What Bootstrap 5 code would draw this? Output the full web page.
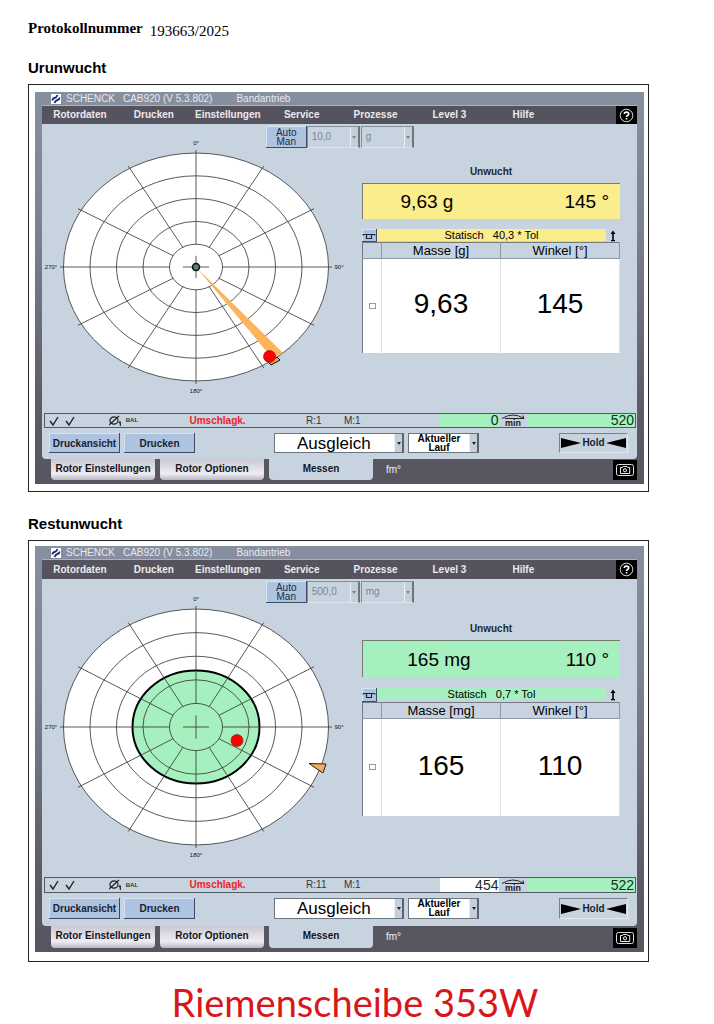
<!DOCTYPE html>
<html lang="de">
<head>
<meta charset="utf-8">
<meta name="viewport" content="width=device-width, initial-scale=1">
<title>Protokoll 193663/2025</title>
<link href="https://cdn.jsdelivr.net/npm/bootstrap@5.3.0/dist/css/bootstrap.min.css" rel="stylesheet">
<style>
:root { --panel: #c7d4e0; --ok: #a5f0be; --warn: #fbec8c; }
body { font-family: "Liberation Sans", Arial, sans-serif; color: #000; background: #fff; }
.sheet { padding: 16px 65px 0 28px; }
.protocol { font-family: "Liberation Serif", "Times New Roman", serif; font-size: 15px; line-height: 24px; gap: 7px; height: 42px; }
.protocol dd { padding-top: 3px; }
.section-title { font-size: 15px; line-height: 20px; font-weight: 700; margin: 0 0 6px; }
.frame { border: 1px solid #222; padding: 7px 4px 7px 6px; margin-bottom: 22px; }
.frame.tall { padding: 5px 4px 9px 6px; margin-bottom: 20px; }

.machine { font-size: 10px; line-height: 12px; padding: 0 7px 4px; background: linear-gradient(#8790a0, #7b8190 35%, #5d5b66 80%, #57555f); }
.titlebar { height: 14px; color: #e6e9f0; padding-left: 9px; border-bottom: 1px solid #a9b2bf; }
.titlebar svg { width: 10px; height: 10px; margin-right: 5px; }
.menu { background: #55535e; height: 18px; }
.tall .menu { height: 19px; }
.menu .nav { flex: 1 1 0; padding-left: 1px; }
.menu a { flex: 0 0 12.9%; color: #eceaf0; text-align: center; text-decoration: none; font-weight: 700; }
.icon-btn { background: #000; border: 0; padding: 0; display: grid; place-items: center; }
.help { width: 21px; height: 100%; }
.help svg { width: 15px; height: 15px; }

.screen { background: var(--panel); border-radius: 0 0 4px 4px; padding-bottom: 6px; }
.tall .screen { padding-bottom: 7px; }
.stage { display: grid; grid-template-columns: minmax(0, 320fr) minmax(0, 275fr); grid-template-rows: 26px 1fr; }
.dial { grid-area: 1 / 1 / 3 / 2; width: 100%; display: block; }
.dial text { font-size: 6px; text-anchor: middle; fill: #111; }
.tools { grid-area: 1 / 1 / 2 / 3; padding: 2px 0 0 37.6%; z-index: 1; display: flex; height: 24px; }
.results { grid-area: 2 / 2 / 3 / 3; padding-right: 17px; }

.key { background: #adc3e0; border: 0; border-radius: 0; color: #000; padding: 0; font-size: 10px; line-height: 9px; box-shadow: inset -1px -1px #3f4b66, inset 1px 1px #d7e4f4; }
.tools .key { width: 41px; color: #222c3a; }
.combo { display: flex; position: relative; min-width: 0; background: #fff; border: 1px solid #6d7580; border-right: 2px solid #5b626c; }
.combo select { appearance: none; border: 0; background: transparent; color: inherit; padding: 0 0 0 4px; width: 100%; min-width: 0; font-size: inherit; border-radius: 0; }
.combo .arrow { position: absolute; right: 0; top: 0; bottom: 0; width: 8px; background: #c3cfdb; border-left: 1px solid #e9eef4; pointer-events: none; display: grid; place-items: center; }
.combo .arrow::after { content: ""; border: 2px solid transparent; border-top: 3px solid #222; border-bottom: 0; }
.tools .combo { width: 53px; margin-right: 1px; background: transparent; color: #7b8590; border-color: #87909a #6d7580 #dde5ec #87909a; }
.tools .combo .arrow::after { border-top-color: #7b8590; }

.caption { font-weight: 700; font-size: 10px; line-height: 12px; text-align: center; padding: 16px 0 5px; color: #1d2a33; }
.readout { height: 36px; font-size: 19px; line-height: 35px; border: 1px solid #777c70; border-width: 1px 0 0 1px; display: grid; grid-template-columns: 52% 1fr; margin-bottom: 10px; padding-right: 11px; }
.readout span { text-align: center; }
.readout span + span { text-align: right; }
.warn { background: var(--warn); }
.ok { background: var(--ok); }
.tolrow { height: 13px; font-size: 11px; line-height: 12px; white-space: pre; }
.tolrow .key { width: 15px; }
.tolrow .tol { flex: 1; text-align: center; height: 12px; }
.tolrow .up { width: 14px; height: 13px; }
.values { width: 100%; table-layout: fixed; background: #fff; border: 1px solid #727a84; border-width: 1px 0 0 1px; text-align: center; }
.values th { font-weight: 400; font-size: 13px; line-height: 15px; background: var(--panel); border: 1px solid #8d98a4; border-width: 0 1px 1px 0; padding: 0; }
.values td { height: 94px; font-size: 28px; line-height: 30px; padding: 0 0 3px; border-right: 1px solid #dde4e4; vertical-align: middle; }
.values col:first-child { width: 19px; }
.values td:first-child { line-height: 7px; padding: 0; }
.values input { appearance: none; display: block; width: 7px; height: 6px; border: 1px solid #9a9a9a; margin: 0 auto; }
.tall .caption { padding: 18px 0 5px; }
.tall .readout { height: 37px; line-height: 37px; margin-bottom: 11px; }
.tall .tolrow { height: 14px; }
.tall .values td { height: 97px; }

.status { margin: 0 1px 5px 2px; height: 15px; line-height: 13px; border: 1px solid #4f5a64; display: grid; align-items: center; white-space: nowrap; color: #333;
  grid-template-columns: minmax(0, 64fr) minmax(0, 81fr) minmax(0, 117fr) minmax(0, 38fr) minmax(0, 96fr) minmax(0, 60fr) minmax(0, 28fr) minmax(0, 108fr); }
.tall .status { height: 16px; line-height: 14px; }
.status svg { display: block; }
.status .speed { font-size: 14px; text-align: right; color: #10301c; height: 100%; padding-right: 1px; }
.alarm { color: #ee1c25; font-weight: 700; }
.bal { font-size: 6px; font-weight: 700; }
.controls { padding: 0 9px 0 7px; height: 20px; display: grid;
  grid-template-columns: minmax(0, 71fr) minmax(0, 71fr) minmax(0, 71fr) minmax(0, 130fr) minmax(0, 71fr) minmax(0, 72fr) minmax(0, 69fr); column-gap: 4px; }
.tall .controls { height: 21px; }
.controls .key { font-weight: 700; color: #1a2230; }
.controls .mode { grid-column: 4; font-size: 17px; }
.controls .mode select { padding-left: 22px; line-height: 20px; height: 18px; }
.controls .run select { color: transparent; }
.controls .run option { color: #000; }
.run .face { position: absolute; inset: 0 8px 0 0; text-align: center; line-height: 9px; font-weight: 700; pointer-events: none; }
.hold { grid-column: 7; color: #1a2230; background: transparent; border: 1px solid #78828c; border-color: #78828c #e3eaf0 #e3eaf0 #78828c; padding: 0 1px; font-weight: 700; }
.hold svg { width: 20px; height: 10px; }

.tabs { height: 21px; gap: 5px; padding-left: 9px; }
.tall .tabs { height: 22px; }
.tabs a { flex: 0 0 104px; text-align: center; line-height: 20px; color: #15151c; font-weight: 700; text-decoration: none; border-radius: 0 0 4px 4px; background: linear-gradient(#c9c7d2, #efedf3 70%, #b9b7c4); }
.tabs a.active { background: var(--panel); }
.tabs .unit { color: #f0eef4; padding-left: 8px; }
.camera { width: 24px; height: 20px; align-self: end; }
.camera svg { width: 18px; height: 12px; }
.part { font-family: Lato, sans-serif; color: #d9161c; font-size: 38px; line-height: 40px; text-align: center; padding: 0 4px 0 0; margin: 0; }
</style>
</head>
<body>
<svg width="0" height="0" class="position-absolute" aria-hidden="true">
  <defs>
    <g id="rings" fill="none" stroke="#3a3a3a" stroke-width=".9">
      <circle r="26.5"/><circle r="53"/><circle r="79.5"/><circle r="106"/><circle r="132.5"/>
      <path d="M-13 0H13M0 -13V13M26.5 0H136M-26.5 0H-136M0 26.5V136M0 -26.5V-136"/>
      <path d="M13.2 23L67.8 117.400M-13.2 23L-67.8 117.400M13.2 -23L67.8 -117.400M-13.2 -23L-67.8 -117.400M23 13.200L118 67.800M-23 13.200L-118 67.800M23 -13.200L118 -67.800M-23 -13.200L-118 -67.800"/>
    </g>
    <symbol id="logo" viewBox="0 0 10 10"><path fill="#fff" d="M0 0h10v10H0z"/><path fill="none" stroke="#1d2c78" stroke-width="1.900" d="M1.500 6.500Q1.500 4.500 3.500 4T6.500 1M8.500 3.500Q8.500 5.500 6.500 6T3.500 9"/></symbol>
    <symbol id="question" viewBox="0 0 15 15"><circle cx="7.500" cy="7.500" r="6.300" fill="none" stroke="#ddd"/><path d="M5.300 6C5.300 3.500 9.700 3.500 9.700 6c0 1.500-2.200 1.500-2.200 3" fill="none" stroke="#fff" stroke-width="1.600"/><path fill="#fff" d="M6.700 10h1.600v1.500H6.700z"/></symbol>
    <symbol id="up" viewBox="0 0 14 13"><path d="M7 12V3" stroke="#000" stroke-width="1.600"/><path d="M4.500 5L7 1.500 9.500 5zM5 11h4v1.200H5z"/></symbol>
    <symbol id="rotor" viewBox="0 0 15 12"><path d="M1 4.500h12M4.500 4.500v4h5v-4M1 4.500v1M13 4.500v1" fill="none" stroke="#1c2438" stroke-width="1.200"/></symbol>
    <symbol id="checks" viewBox="0 0 26 12"><path d="M1 6l3 4 5-8M17 6l3 4 5-8" fill="none" stroke="#222" stroke-width="1.400"/></symbol>
    <symbol id="phase" viewBox="0 0 13 12"><ellipse cx="5" cy="5.500" rx="4" ry="3.600" fill="none" stroke="#222" stroke-width="1.200"/><path d="M0 10L10 1M11.300 6.500V11M10 8l1.300-1.500" fill="none" stroke="#222" stroke-width="1.200"/></symbol>
    <symbol id="rpm" viewBox="0 0 28 13"><path d="M3 4.500Q14-2.500 25 4.500M6 4.500H21M25 4.500l-1-3M25 4.500h-4" fill="none" stroke="#222"/><text x="14" y="12.500" font-size="9" font-weight="700" text-anchor="middle" fill="#222">min</text></symbol>
    <symbol id="cam" viewBox="0 0 18 12"><rect x=".5" y=".5" width="17" height="11" rx="2" fill="none" stroke="#ddd"/><path d="M4.500 3.500h2l.6-1h4l.6 1h2v6h-9.200z" fill="none" stroke="#eee"/><circle cx="9" cy="6.300" r="1.600" fill="none" stroke="#fff"/></symbol>
  </defs>
</svg>

<main class="sheet">
  <dl class="protocol d-flex mb-0"><dt>Protokollnummer</dt><dd class="mb-0">193663/2025</dd></dl>

  <h2 class="section-title">Urunwucht</h2>
  <section class="frame">
    <div class="machine">
      <div class="titlebar d-flex align-items-center">
        <svg aria-hidden="true"><use href="#logo"/></svg><span>SCHENCK</span><span class="ms-2">CAB920 (V 5.3.802)</span><span class="ms-4">Bandantrieb</span>
      </div>
      <div class="menu d-flex align-items-center">
        <nav class="nav flex-nowrap"><a href="#">Rotordaten</a><a href="#">Drucken</a><a href="#">Einstellungen</a><a href="#">Service</a><a href="#">Prozesse</a><a href="#">Level 3</a><a href="#">Hilfe</a></nav>
        <button class="icon-btn help" aria-label="Hilfe"><svg><use href="#question"/></svg></button>
      </div>
      <div class="screen">
        <div class="stage">
          <svg class="dial" viewBox="-154 -143 320 289" role="img" aria-label="Polardiagramm Urunwucht">
            <ellipse rx="132.500" ry="114" fill="#fff"/>
            <use href="#rings" transform="scale(1 .86)"/>
            <path d="M0 0L87 86 76 91z" fill="#fdb45c"/>
            <circle r="3.500" fill="#4f8a62" stroke="#111" stroke-width="1.500"/>
            <path d="M72 95l9-5 3 3-9 5z" fill="#f7a048" stroke="#111"/>
            <circle cx="73.500" cy="89.500" r="6" fill="#f00" stroke="#7a1010" stroke-width=".6"/>
            <text x="0" y="-122">0°</text><text x="143" y="2">90°</text><text x="0" y="126">180°</text><text x="-145" y="2">270°</text>
          </svg>
          <div class="tools">
            <button class="key">Auto<br>Man</button>
            <div class="combo"><select aria-label="Skala" disabled><option>10,0</option></select><span class="arrow"></span></div>
            <div class="combo"><select aria-label="Einheit" disabled><option>g</option></select><span class="arrow"></span></div>
          </div>
          <div class="results">
            <div class="caption">Unwucht</div>
            <div class="readout warn"><span>9,63 g</span><span>145 °</span></div>
            <div class="tolrow d-flex"><button class="key" aria-label="Ebene"><svg width="15" height="12" class="d-block"><use href="#rotor"/></svg></button><div class="tol warn">Statisch   40,3 * Tol</div><svg class="up"><use href="#up"/></svg></div>
            <table class="values"><colgroup><col><col><col></colgroup>
              <thead><tr><th></th><th>Masse [g]</th><th>Winkel [°]</th></tr></thead>
              <tbody><tr><td><input type="checkbox" aria-label="Auswahl"></td><td>9,63</td><td>145</td></tr></tbody>
            </table>
          </div>
        </div>
        <div class="status">
          <svg width="26" height="12" class="ms-1"><use href="#checks"/></svg>
          <div class="d-flex align-items-center"><svg width="13" height="12" class="me-1"><use href="#phase"/></svg><span class="bal">BAL</span></div>
          <span class="alarm">Umschlagk.</span><span>R:1</span><span>M:1</span>
          <div class="speed ok">0</div><svg width="100%" height="13"><use href="#rpm"/></svg><div class="speed ok">520</div>
        </div>
        <div class="controls">
          <button class="key">Druckansicht</button><button class="key">Drucken</button>
          <div class="combo mode"><select aria-label="Modus"><option>Ausgleich</option></select><span class="arrow"></span></div>
          <div class="combo run"><select aria-label="Lauf"><option>Aktueller Lauf</option></select><span class="face" aria-hidden="true">Aktueller<br>Lauf</span><span class="arrow"></span></div>
          <button class="hold d-flex align-items-center justify-content-between"><svg viewBox="0 0 20 10"><path d="M0 0l20 5-20 5z"/></svg>Hold<svg viewBox="0 0 20 10"><path d="M20 0L0 5l20 5z"/></svg></button>
        </div>
      </div>
      <nav class="tabs d-flex"><a href="#">Rotor Einstellungen</a><a href="#">Rotor Optionen</a><a href="#" class="active">Messen</a><span class="unit align-self-center">fm°</span>
        <button class="icon-btn camera ms-auto" aria-label="Bildschirmfoto"><svg><use href="#cam"/></svg></button></nav>
    </div>
  </section>

  <h2 class="section-title">Restunwucht</h2>
  <section class="frame tall">
    <div class="machine">
      <div class="titlebar d-flex align-items-center">
        <svg aria-hidden="true"><use href="#logo"/></svg><span>SCHENCK</span><span class="ms-2">CAB920 (V 5.3.802)</span><span class="ms-4">Bandantrieb</span>
      </div>
      <div class="menu d-flex align-items-center">
        <nav class="nav flex-nowrap"><a href="#">Rotordaten</a><a href="#">Drucken</a><a href="#">Einstellungen</a><a href="#">Service</a><a href="#">Prozesse</a><a href="#">Level 3</a><a href="#">Hilfe</a></nav>
        <button class="icon-btn help" aria-label="Hilfe"><svg><use href="#question"/></svg></button>
      </div>
      <div class="screen">
        <div class="stage">
          <svg class="dial" viewBox="-154 -148 320 298" role="img" aria-label="Polardiagramm Restunwucht">
            <ellipse rx="132.500" ry="118" fill="#fff"/>
            <ellipse rx="63.500" ry="56.500" fill="#a5f0be" stroke="#000" stroke-width="2"/>
            <use href="#rings" transform="scale(1 .89)"/>
            <path d="M113 36.500l17 .5-3 9z" fill="#f9ab55" stroke="#222"/>
            <circle cx="41" cy="13.500" r="6" fill="#f00" stroke="#7a1010" stroke-width=".6"/>
            <text x="0" y="-126">0°</text><text x="143" y="2">90°</text><text x="0" y="130">180°</text><text x="-145" y="2">270°</text>
          </svg>
          <div class="tools">
            <button class="key">Auto<br>Man</button>
            <div class="combo"><select aria-label="Skala" disabled><option>500,0</option></select><span class="arrow"></span></div>
            <div class="combo"><select aria-label="Einheit" disabled><option>mg</option></select><span class="arrow"></span></div>
          </div>
          <div class="results">
            <div class="caption">Unwucht</div>
            <div class="readout ok"><span class="ps-4">165 mg</span><span>110 °</span></div>
            <div class="tolrow d-flex"><button class="key" aria-label="Ebene"><svg width="15" height="12" class="d-block"><use href="#rotor"/></svg></button><div class="tol ok">Statisch   0,7 * Tol</div><svg class="up"><use href="#up"/></svg></div>
            <table class="values"><colgroup><col><col><col></colgroup>
              <thead><tr><th></th><th>Masse [mg]</th><th>Winkel [°]</th></tr></thead>
              <tbody><tr><td><input type="checkbox" aria-label="Auswahl"></td><td>165</td><td>110</td></tr></tbody>
            </table>
          </div>
        </div>
        <div class="status">
          <svg width="26" height="12" class="ms-1"><use href="#checks"/></svg>
          <div class="d-flex align-items-center"><svg width="13" height="12" class="me-1"><use href="#phase"/></svg><span class="bal">BAL</span></div>
          <span class="alarm">Umschlagk.</span><span>R:11</span><span>M:1</span>
          <div class="speed bg-white">454</div><svg width="100%" height="13"><use href="#rpm"/></svg><div class="speed ok">522</div>
        </div>
        <div class="controls">
          <button class="key">Druckansicht</button><button class="key">Drucken</button>
          <div class="combo mode"><select aria-label="Modus"><option>Ausgleich</option></select><span class="arrow"></span></div>
          <div class="combo run"><select aria-label="Lauf"><option>Aktueller Lauf</option></select><span class="face" aria-hidden="true">Aktueller<br>Lauf</span><span class="arrow"></span></div>
          <button class="hold d-flex align-items-center justify-content-between"><svg viewBox="0 0 20 10"><path d="M0 0l20 5-20 5z"/></svg>Hold<svg viewBox="0 0 20 10"><path d="M20 0L0 5l20 5z"/></svg></button>
        </div>
      </div>
      <nav class="tabs d-flex"><a href="#">Rotor Einstellungen</a><a href="#">Rotor Optionen</a><a href="#" class="active">Messen</a><span class="unit align-self-center">fm°</span>
        <button class="icon-btn camera ms-auto" aria-label="Bildschirmfoto"><svg><use href="#cam"/></svg></button></nav>
    </div>
  </section>
</main>
<p class="part">Riemenscheibe 353W</p>
<script src="https://cdn.jsdelivr.net/npm/bootstrap@5.3.0/dist/js/bootstrap.bundle.min.js"></script>
</body>
</html>
